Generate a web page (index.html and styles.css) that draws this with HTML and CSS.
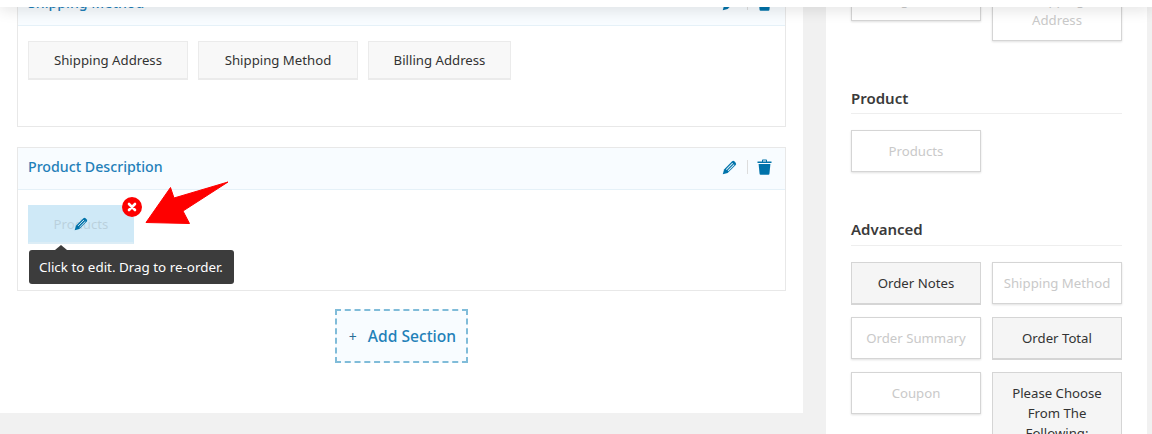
FILE: index.html
```html
<!DOCTYPE html>
<html lang="en">
<head>
<meta charset="utf-8">
<title>Checkout builder</title>
<link rel="stylesheet" href="styles.css">
</head>
<body>
<svg class="defs" width="0" height="0" aria-hidden="true">
  <symbol id="pencil" viewBox="0 0 16 16">
    <path d="M0.8 15.2 L2.2 10 L10.8 1.4 Q12 0.4 13.2 1.4 L14.6 2.8 Q15.6 4 14.6 5.2 L6 13.8 Z" fill="#0073aa"/>
    <path d="M4.6 10.2 L11.4 3.4 M6.4 11.6 L13 5" stroke="#d8ecf7" stroke-width="1.1" fill="none"/>
  </symbol>
  <symbol id="trash" viewBox="0 0 15 16">
    <path d="M0.5 2.4 H5 V1.2 Q5 0.4 5.8 0.4 H9.2 Q10 0.4 10 1.2 V2.4 H14.5 V4 H0.5 Z M6 1.4 V2.4 H9 V1.4 Z" fill="#0073aa" fill-rule="evenodd"/>
    <path d="M1.6 5 H13.4 L12.4 15 Q12.3 15.8 11.5 15.8 H3.5 Q2.7 15.8 2.6 15 Z" fill="#0073aa"/>
  </symbol>
</svg>
<div class="topbar"></div>
<div class="page">
  <main class="builder">
    <section class="section">
      <header class="section-head">
        <h2 class="section-title">Shipping Method</h2>
        <div class="section-tools">
          <svg class="icon-pencil"><use href="#pencil"/></svg>
          <span class="tool-sep"></span>
          <svg class="icon-trash"><use href="#trash"/></svg>
        </div>
      </header>
      <div class="section-body">
        <div class="chip chip-wide">Shipping Address</div>
        <div class="chip chip-wide">Shipping Method</div>
        <div class="chip chip-mid">Billing Address</div>
      </div>
    </section>
    <section class="section">
      <header class="section-head">
        <h2 class="section-title">Product Description</h2>
        <div class="section-tools">
          <svg class="icon-pencil"><use href="#pencil"/></svg>
          <span class="tool-sep"></span>
          <svg class="icon-trash"><use href="#trash"/></svg>
        </div>
      </header>
      <div class="section-body">
        <div class="chip chip-active">
          <span class="chip-faded">Products</span>
          <svg class="chip-pencil"><use href="#pencil"/></svg>
          <span class="chip-remove">
            <svg viewBox="0 0 10 10" class="remove-x"><path d="M2 2 L8 8 M8 2 L2 8" stroke="#fff" stroke-width="2.6" stroke-linecap="round"/></svg>
          </span>
          <div class="tooltip">Click to edit. Drag to re-order.</div>
        </div>
        <svg class="callout" viewBox="0 0 90 50" aria-hidden="true">
          <path d="M1 41.5 L25.5 6.5 L29 17 L83 1 L38 30 L44.5 42.5 Z" fill="#fe0000" stroke="#fe0000" stroke-linejoin="round"/>
        </svg>
      </div>
    </section>
    <div class="add-row">
      <button class="add-section"><span class="add-plus">+</span><span class="add-label">Add Section</span></button>
    </div>
  </main>
  <aside class="sidebar">
    <div class="field-grid">
      <div class="field">Billing Address</div>
      <div class="field">Shipping<br>Address</div>
    </div>
    <h3 class="group-title">Product</h3>
    <div class="field-grid">
      <div class="field">Products</div>
    </div>
    <h3 class="group-title group-title-tall">Advanced</h3>
    <div class="field-grid">
      <div class="field field-used">Order Notes</div>
      <div class="field">Shipping Method</div>
      <div class="field">Order Summary</div>
      <div class="field field-used">Order Total</div>
      <div class="field">Coupon</div>
      <div class="field field-used">Please Choose From The Following:</div>
    </div>
  </aside>
</div>
</body>
</html>
```

FILE: styles.css
```css
html, body {
  margin: 0;
  padding: 0;
  height: 434px;
  overflow: hidden;
  background: #f1f1f1;
  font-family: "Noto Sans", "Open Sans", sans-serif;
  font-size: 13.2px;
  color: #333;
}

.defs {
  position: absolute;
}

.topbar {
  position: absolute;
  top: 0;
  left: 0;
  right: 0;
  height: 7px;
  background: #fff;
  box-shadow: 0 0 16px rgba(0, 0, 0, 0.22);
  z-index: 10;
}

.page {
  display: flex;
  gap: 23px;
  width: 1147px;
  height: 434px;
  overflow: hidden;
}

.builder {
  width: 803px;
  height: 430px;
  margin-top: -17px;
  padding: 0 17px;
  box-sizing: border-box;
  background: #fff;
  flex: none;
  display: flex;
  flex-direction: column;
  gap: 20px;
}

.section {
  border: 1px solid #e8e8e8;
  height: 144px;
  box-sizing: border-box;
  flex: none;
}

.section-head {
  display: flex;
  align-items: center;
  justify-content: space-between;
  height: 42px;
  box-sizing: border-box;
  padding: 0 13px 0 10px;
  background: #f8fcff;
  border-bottom: 1px solid #e5f1f8;
}

.section-title {
  margin: 0 0 4px;
  font-size: 14.2px;
  font-weight: 500;
  color: #1f80b9;
}

.section-tools {
  display: flex;
  align-items: center;
  gap: 9px;
  margin-bottom: 3px;
}

.icon-pencil {
  width: 15px;
  height: 15px;
  margin-right: 1px;
}

.icon-trash {
  width: 15px;
  height: 16px;
}

.tool-sep {
  width: 1px;
  height: 14px;
  background: #ddd;
}

.section-body {
  position: relative;
  display: flex;
  gap: 10px;
  padding: 15px 10px;
  align-items: flex-start;
}

.chip {
  position: relative;
  height: 39px;
  width: 106px;
  box-sizing: border-box;
  padding-bottom: 1px;
  display: flex;
  align-items: center;
  justify-content: center;
  background: #f8f8f8;
  border: 1px solid #ebebeb;
  border-bottom-width: 2px;
  white-space: nowrap;
}

.chip-wide {
  width: 160px;
}

.chip-mid {
  width: 143px;
}

.chip-active {
  background: #cfe9f7;
  border-color: #cfe9f7;
  border-bottom-color: #dcedf6;
}

.chip-faded {
  color: #333;
  opacity: 0.13;
}

.chip-pencil {
  position: absolute;
  left: 45px;
  top: 11px;
  width: 14px;
  height: 14px;
}

.chip-remove {
  position: absolute;
  left: 93px;
  top: -9px;
  width: 20px;
  height: 20px;
  border-radius: 50%;
  background: #fe0000;
  display: flex;
  align-items: center;
  justify-content: center;
}

.remove-x {
  width: 10px;
  height: 10px;
}

.tooltip {
  position: absolute;
  left: 0;
  top: 44px;
  padding: 7px 11px 7px 10px;
  height: 34px;
  box-sizing: border-box;
  background: #3c3c3c;
  color: #fff;
  font-size: 13.4px;
  line-height: 20px;
  border-radius: 3px;
  white-space: nowrap;
}

.tooltip::before {
  content: "";
  position: absolute;
  left: 26px;
  top: -5px;
  border-left: 6px solid transparent;
  border-right: 6px solid transparent;
  border-bottom: 5px solid #3c3c3c;
}

.callout {
  position: absolute;
  left: 127px;
  top: -9px;
  width: 90px;
  height: 50px;
}

.add-row {
  display: flex;
  justify-content: center;
  margin-top: -2px;
}

.add-section {
  width: 133px;
  height: 54px;
  padding: 0 0 0 2px;
  background: #f8fcff;
  border: 2px dashed #80bcd9;
  display: flex;
  align-items: center;
  justify-content: center;
  gap: 11px;
  font-family: inherit;
  color: #2280b8;
}

.add-plus {
  font-size: 14px;
  color: #2a6f97;
}

.add-label {
  font-size: 15.6px;
  font-weight: 500;
}

.sidebar {
  width: 321px;
  flex: none;
  margin-top: -21px;
  height: 455px;
  padding: 0 25px;
  box-sizing: border-box;
  background: #fff;
}

.field-grid {
  display: grid;
  grid-template-columns: 130px 130px;
  column-gap: 11px;
  row-gap: 12px;
  align-items: start;
}

.field {
  box-sizing: border-box;
  min-height: 42px;
  padding: 10px 5px;
  text-align: center;
  line-height: 20px;
  color: #c9c9c9;
  background: #fff;
  border: 1px solid #d5d5d5;
  box-shadow: 0 1px 2px rgba(0, 0, 0, 0.12);
}

.field-used {
  color: #333;
  background: #f5f5f5;
  box-shadow: none;
  border-bottom-width: 2px;
}

.group-title {
  margin: 47px 0 16px;
  height: 26px;
  box-sizing: border-box;
  padding-bottom: 5px;
  font-size: 15px;
  line-height: 20px;
  font-weight: 600;
  color: #3a3a3a;
  border-bottom: 1px solid #eee;
  width: 271px;
}

.group-title-tall {
  height: 27px;
}
```
